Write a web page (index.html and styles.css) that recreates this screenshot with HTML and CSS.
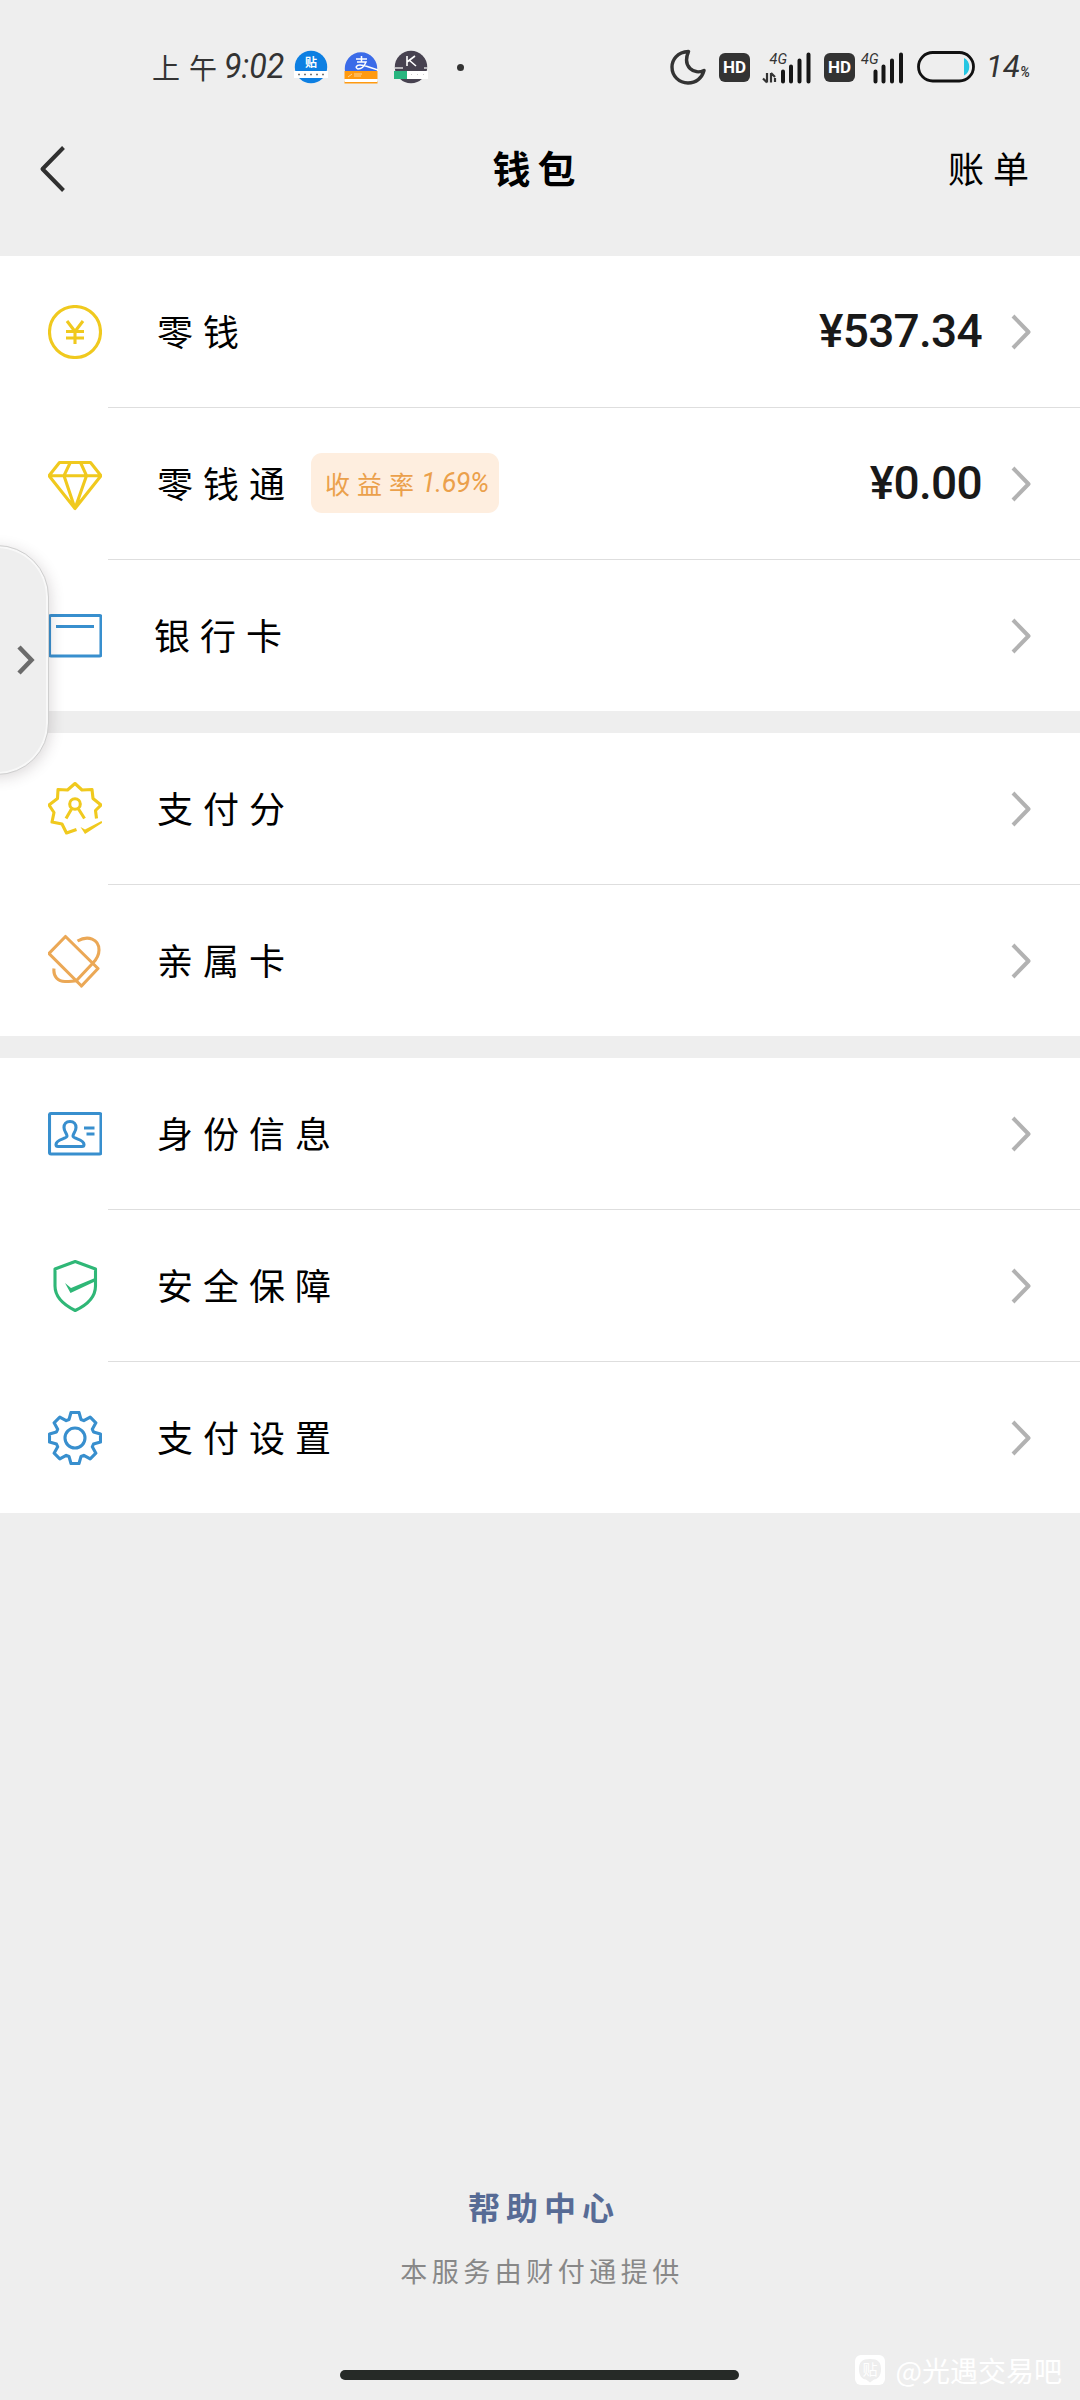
FILE: index.html
```html
<!DOCTYPE html>
<html lang="zh-CN">
<head>
<meta charset="utf-8">
<title>钱包</title>
<link rel="stylesheet" href="styles.css">
</head>
<body>
<div class="screen">
  <div class="status">
    <span class="time"><span class="ampm">上午</span><span class="clock">9:02</span></span>
    <div class="notices">
      <svg width="34" height="34" viewBox="0 0 34 34"><circle cx="17" cy="17" r="16.2" fill="#0d7fe2"/><text x="17" y="17" font-size="12" text-anchor="middle" fill="#fff" font-weight="700">贴</text><path d="M0 21h34v7H0z" fill="#fff"/><path d="M4 24.5h27" stroke="#777" stroke-width="1.5" stroke-dasharray="2 4"/></svg>
      <svg width="34" height="34" viewBox="0 0 34 34"><path d="M1 21a16.2 16.2 0 1 1 32 0z" fill="#3b6be8"/><path d="M12 9h11M17.5 6v6M13 12h9c-2 5-5 7-8 7-3-1-2-4 2-4 5 0 10 3 18 5" fill="none" stroke="#fff" stroke-width="1.5"/><path d="M.5 21h33v8H.5zM.5 31.5h33v2H.5z" fill="#ff9a10"/><path d="M1 29h32v3H1z" fill="#fff"/><path d="M4 27l4-3M10 24h8M10 26h7" stroke="#ffd493"/></svg>
      <svg width="34" height="34" viewBox="0 0 34 34"><circle cx="17" cy="17" r="16.2" fill="#474250"/><path d="M13 6v10M21 6l-8 6M15 10l7 6" stroke="#fff" stroke-width="1.6" fill="none"/><path d="M1 18h8M30 18h4" stroke="#ddd" stroke-width="1.5"/><path d="M0 21h13v8H0z" fill="#28b57f"/><path d="M13 21h21v8H13z" fill="#fff"/><path d="M17 24.500h14" stroke="#ccc" stroke-dasharray="1 5"/></svg>
      <i class="dot"></i>
    </div>
    <div class="system">
      <svg width="36" height="36" viewBox="0 0 36 36"><path d="M18.500 2.500C7 3 2 11 2 18c0 9 7 16 16 16 8 0 14-5 16-12.500C24 26 12 18 18.500 2.500z" fill="none" stroke="#333" stroke-width="3.4" stroke-linejoin="round"/></svg>
      <span class="hd hd-first">HD</span>
      <svg class="signal signal-data" width="50" height="36" viewBox="0 0 50 36"><text x="7.500" y="14.500" font-size="14.500" font-style="italic" fill="#333">4G</text><path d="M5 33.500V24M5 33.500l-4-4M9 24v9.500M9 24l4 4M13 29v4" stroke="#333" stroke-width="2.200" fill="none"/><path d="M21 22.500v10M29 17.500v15M37.500 11.500v21M46.500 5.500v27" stroke="#161616" stroke-width="4" stroke-linecap="round"/></svg>
      <span class="hd hd-second">HD</span>
      <svg class="signal signal-plain" width="44" height="36" viewBox="0 0 44 36"><text x="1" y="14.500" font-size="14.500" font-style="italic" fill="#333">4G</text><path d="M15.500 22.500v10M23.500 17.500v15M32 11.500v21M41 5.500v27" stroke="#161616" stroke-width="4" stroke-linecap="round"/></svg>
      <svg class="battery" width="58" height="32" viewBox="0 0 58 32"><rect x="1.500" y="1.500" width="55" height="28.500" rx="14.200" fill="none" stroke="#111" stroke-width="2.800"/><path d="M47 7v17.500c7-3 7-14.500 0-17.500z" fill="#25c6e2"/></svg>
      <span class="percent"><span>14</span><small>%</small></span>
    </div>
  </div>

  <header class="header">
    <svg class="back" width="28" height="50" viewBox="0 0 28 50"><path d="M24.500 3.500L3.500 25l21 21.500" fill="none" stroke="#303030" stroke-width="4" stroke-linejoin="round"/></svg>
    <h1 class="title">钱包</h1>
    <span class="bill">账单</span>
  </header>

  <main>
    <section class="group">
      <div class="row">
        <svg class="icon gold" viewBox="0 0 54 54"><circle cx="27" cy="27" r="25.500"/><path d="M19 16l8 10.500L35 16M27 26v13M18 26.500h18M18 33h18"/></svg>
        <span class="label">零钱</span>
        <span class="amount">¥537.34</span>
        <svg class="go" viewBox="0 0 22 38"><path d="M3 3l15.500 16L3 35"/></svg>
      </div>
      <div class="row">
        <svg class="icon gold" viewBox="0 0 54 54"><path d="M11.500 5.500h31L53 18.700 27 51.500 1 18.700zM1 18.700h52M22.300 5.500L16 18.700l11 32.800 11.500-32.800-6-13.200"/></svg>
        <span class="label">零钱通</span>
        <span class="tag"><span class="tag-name">收益率</span><span class="tag-rate">1.69%</span></span>
        <span class="amount">¥0.00</span>
        <svg class="go" viewBox="0 0 22 38"><path d="M3 3l15.500 16L3 35"/></svg>
      </div>
      <div class="row">
        <svg class="icon blue" viewBox="0 0 54 54"><rect x="1.500" y="6.500" width="51.500" height="40.500" rx="1.500"/><path d="M8 17.500h38"/></svg>
        <span class="label label-bank">银行卡</span>
        <svg class="go" viewBox="0 0 22 38"><path d="M3 3l15.500 16L3 35"/></svg>
      </div>
    </section>

    <section class="group">
      <div class="row">
        <svg class="icon gold" viewBox="0 0 54 54"><path d="M28.500 47.500L18.500 51 14 42 4 40l2-9.500L1 23l8.500-6.500.5-9 9.500.5L27 1.500 34 8l10-.5 1 9 8 6.500-5.500 5.500 1 8"/><circle cx="27" cy="22" r="5.300"/><path d="M23.500 27L18 36.500M30.500 27l6 9.500"/><path class="fill" d="M32.500 45l4.500 2.500L53.500 39l1 1.800L37 52z"/></svg>
        <span class="label">支付分</span>
        <svg class="go" viewBox="0 0 22 38"><path d="M3 3l15.500 16L3 35"/></svg>
      </div>
      <div class="row">
        <svg class="icon orange" viewBox="0 0 54 54"><path d="M17.500 2.500L50 34.500 33.500 52 1 19.500zM44.500 29.500l-16 17M29.500 7C40 1 51 5 51 16c0 5-2 9-6.500 13.500M6 34.500c-1 8 4 13 11 13 4 0 8 0 11.500-1"/></svg>
        <span class="label">亲属卡</span>
        <svg class="go" viewBox="0 0 22 38"><path d="M3 3l15.500 16L3 35"/></svg>
      </div>
    </section>

    <section class="group">
      <div class="row">
        <svg class="icon blue" viewBox="0 0 54 54"><rect x="1.500" y="6.500" width="51.500" height="40.500" rx="1.500"/><path d="M22 14.500c-4 0-6 3-6 6 0 4 3 6 3 8.500 0 3-11 3-11 8.500 0 1.500 1 2 2 2h24c1 0 2-.5 2-2 0-5.500-11-5.500-11-8.500 0-2.500 3-4.500 3-8.500 0-3-2-6-6-6zM36 21h10.500M38.500 27h8"/></svg>
        <span class="label">身份信息</span>
        <svg class="go" viewBox="0 0 22 38"><path d="M3 3l15.500 16L3 35"/></svg>
      </div>
      <div class="row">
        <svg class="icon green" viewBox="0 0 54 54"><path d="M27.200 2.500L7 10v17c0 11 9 19 20.200 24.500C39 46 47.500 38 47.500 27V10z"/><path class="fill" d="M17 24l6 5 24-10v3.500L22.500 34z"/></svg>
        <span class="label">安全保障</span>
        <svg class="go" viewBox="0 0 22 38"><path d="M3 3l15.500 16L3 35"/></svg>
      </div>
      <div class="row">
        <svg class="icon blue" viewBox="0 0 54 54"><path d="M21 8.500l2-7h8l2 7 2.800 1.200 6.400-3.600 5.700 5.700-3.600 6.400 1.200 2.800 7 2v8l-7 2-1.200 2.800 3.600 6.400-5.700 5.700-6.400-3.600-2.800 1.200-2 7h-8l-2-7-2.800-1.200-6.400 3.600-5.700-5.700 3.600-6.400L8.500 33l-7-2v-8l7-2 1.200-2.800-3.600-6.400 5.700-5.700 6.400 3.600z"/><circle cx="27" cy="27" r="10"/></svg>
        <span class="label">支付设置</span>
        <svg class="go" viewBox="0 0 22 38"><path d="M3 3l15.500 16L3 35"/></svg>
      </div>
    </section>
  </main>

  <footer class="footer">
    <a class="help">帮助中心</a>
    <span class="provider">本服务由财付通提供</span>
  </footer>

  <div class="drawer"><svg width="20" height="32" viewBox="0 0 20 32"><path d="M3 3l12.500 13L3 29" fill="none" stroke="#6b6b6b" stroke-width="4.500"/></svg></div>
  <div class="home-bar"></div>
  <div class="watermark">
    <svg width="32" height="32" viewBox="0 0 32 32"><rect x="1" y="1" width="30" height="30" rx="6" fill="#fff"/><path d="M16 5c-8 0-11 3-11 10s3 10 7 10.500l4 3 4-3c4-.5 7-3.500 7-10.500S24 5 16 5z" fill="#eee"/><text x="16" y="21" font-size="15" text-anchor="middle" fill="#fff">贴</text></svg>
    <span>@光遇交易吧</span>
  </div>
</div>
</body>
</html>
```
FILE: styles.css
```css
* { box-sizing: border-box; }

body {
  margin: 0;
  background: #eee;
  color: #000;
  font-family: "Noto Sans CJK SC", sans-serif;
}

svg { display: block; flex: none; }

.screen {
  position: relative;
  display: flex;
  flex-direction: column;
  width: 1080px;
  height: 2400px;
  overflow: hidden;
}

/* Status bar */
.status {
  display: flex;
  align-items: center;
  height: 134px;
  padding: 0 50px 0 150px;
  color: #333;
}
.time { display: flex; align-items: center; width: 144px; line-height: 40px; white-space: nowrap; }
.ampm { width: 74px; padding-left: 2px; font-size: 28px; letter-spacing: 9px; }
.clock { font-family: Roboto, sans-serif; font-size: 35px; font-style: italic; font-weight: 400; transform: scaleX(.92); transform-origin: left; }
.notices { display: flex; align-items: center; gap: 16px; }
.dot { width: 7px; height: 7px; margin-left: 13px; border-radius: 50%; background: #333; }
.system { display: flex; align-items: center; margin-left: auto; width: 360px; }
.hd {
  width: 31px;
  height: 29px;
  border-radius: 6px;
  background: #333;
  color: #fff;
  font: 700 17px/29px Roboto, sans-serif;
  text-align: center;
}
.hd-first { margin-left: 13px; }
.hd-second { margin-left: 12px; }
.signal { font-family: Roboto, sans-serif; }
.signal-data { margin-left: 12px; }
.signal-plain { margin-left: 5px; }
.battery { margin-left: 13px; }
.percent { display: flex; align-items: baseline; padding-top: 5px; margin-left: 11px; font: italic 400 31px/40px Roboto, sans-serif; }
.percent span { width: 34px; }
.percent small { font-size: 14px; font-weight: 500; }

/* Navigation header */
.header {
  display: grid;
  grid-template-columns: 1fr auto 1fr;
  align-items: center;
  height: 122px;
  padding: 0 42px 52px 39px;
}
.title { margin: -4px 0 0; font-size: 38px; line-height: 50px; font-weight: 700; letter-spacing: 7px; text-indent: -2px; }
.bill { justify-self: end; margin-top: -4px; font-size: 36px; line-height: 50px; letter-spacing: 9px; }

/* Menu groups */
main { display: flex; flex-direction: column; gap: 22px; }
.group { background: #fff; }
.row {
  position: relative;
  display: flex;
  align-items: center;
  height: 152px;
  padding: 0 48px 0 48px;
}
.row:last-child { height: 151px; }
.row:not(:last-child)::after {
  content: "";
  position: absolute;
  left: 108px;
  right: 0;
  bottom: 0;
  height: 1px;
  background: #dedede;
}
.icon { width: 54px; height: 54px; fill: none; stroke: currentColor; stroke-width: 3.1; stroke-linejoin: round; }
.icon .fill { fill: currentColor; stroke: none; }
.gold { color: #f0c91e; }
.blue { color: #388fce; }
.orange { color: #eba856; }
.green { color: #2fb777; }
.label { margin: -4px 0 0 55px; font-size: 36px; line-height: 54px; letter-spacing: 10px; white-space: nowrap; }
.label-bank { margin-left: 52px; }
.tag {
  display: flex;
  align-items: center;
  width: 188px;
  height: 60px;
  margin: -2px 0 0 16px;
  padding-left: 14px;
  border-radius: 11px;
  background: #feeedf;
  color: #eba04b;
  font-size: 25px;
  white-space: nowrap;
}
.tag-name { width: 96px; letter-spacing: 7px; }
.tag-rate { font-family: Roboto, sans-serif; font-size: 27px; font-style: italic; font-weight: 400; letter-spacing: -.5px; }
.amount {
  margin: -3px 0 0 auto;
  color: #191919;
  font: 500 46px/54px Roboto, sans-serif;
  letter-spacing: -.7px;
}
.go { width: 22px; height: 38px; margin-left: auto; fill: none; stroke: #b2b2b2; stroke-width: 4; stroke-linejoin: round; }
.amount + .go { margin-left: 28px; }

/* Footer */
.footer {
  display: flex;
  flex-direction: column;
  align-items: center;
  gap: 21px;
  margin-top: auto;
  padding-bottom: 109px;
}
.help { color: #576b95; font-size: 32px; line-height: 48px; font-weight: 700; letter-spacing: 6px; margin-left: 8px; }
.provider { color: #888; font-size: 27px; line-height: 40px; letter-spacing: 4.500px; margin-left: 4px; }

/* Overlays */
.drawer {
  position: absolute;
  left: -60px;
  top: 545px;
  display: flex;
  align-items: center;
  justify-content: flex-end;
  width: 109px;
  height: 230px;
  padding-right: 12px;
  border: 1px solid #cfcfcf;
  border-radius: 52px;
  background: #eee;
  box-shadow: inset 0 0 0 2px #f8f8f8, 2px 3px 14px rgba(60, 40, 50, .17);
}
.home-bar { position: absolute; left: 340px; bottom: 20px; width: 399px; height: 10px; border-radius: 5px; background: #262a27; }
.watermark {
  position: absolute;
  right: 18px;
  bottom: 10px;
  display: flex;
  align-items: center;
  gap: 10px;
  color: #fff;
  font-size: 28px;
  line-height: 40px;
}
```
